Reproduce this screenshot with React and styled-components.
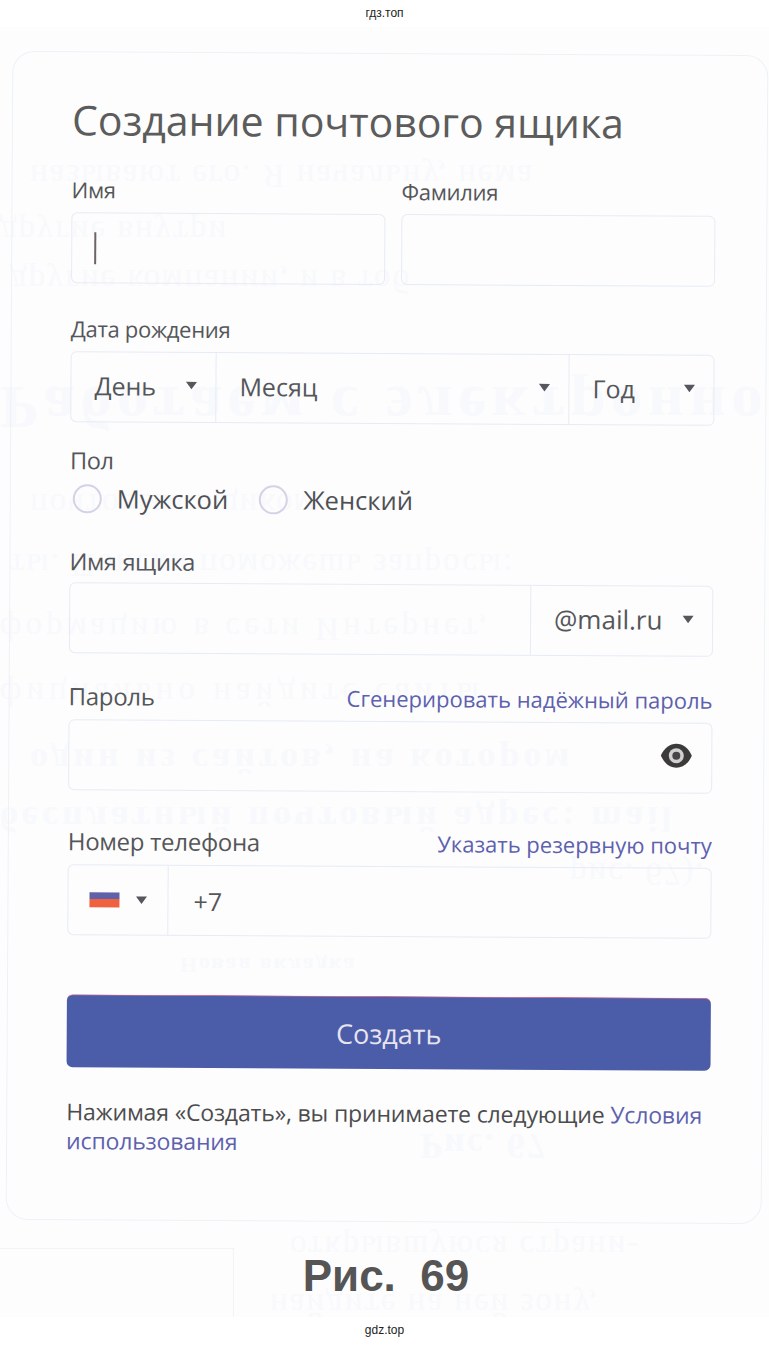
import styled, { createGlobalStyle } from "styled-components";

const GlobalStyle = createGlobalStyle`
  html, body {
    margin: 0;
    padding: 0;
    background: #fff;
  }
  body {
    font-family: "Open Sans", "Noto Sans", sans-serif;
  }
`;

// faint print showing through from the back of the scanned page
const ghostLines = [
  { top: 157, left: 30, size: 33, text: "называют его. Я начальну, нема" },
  { top: 213, left: 0, size: 33, text: "другие внутри" },
  { top: 262, left: 10, size: 33, text: "другие компании, и в тоб" },
  { top: 372, left: 0, size: 62, bold: true, spacing: 6, text: "Работаем с электронной" },
  { top: 486, left: 30, size: 33, text: "почтовым ящиком." },
  { top: 546, left: 10, size: 33, text: "ты. Поиски поможешь запросы:" },
  { top: 610, left: 0, size: 33, spacing: 4, text: "формацию в сети Интернет," },
  { top: 675, left: 0, size: 33, spacing: 5, text: "фициально найдите сайты" },
  { top: 740, left: 30, size: 36, bold: true, spacing: 4, text: "один из сайтов, на котором" },
  { top: 798, left: 0, size: 36, bold: true, spacing: 4, text: "бесплатный почтовый адрес: mail" },
  { top: 855, left: 570, size: 33, text: "рис. 67)." },
  { top: 952, left: 180, size: 22, bold: true, text: "Новая вкладка" },
  { top: 1125, left: 420, size: 36, bold: true, text: "Рис. 67" },
  { top: 1228, left: 290, size: 33, text: "открывшуюся страни-" },
  { top: 1286, left: 270, size: 33, text: "найдите на ней зону," },
];

const Caret = () => (
  <CaretIcon viewBox="0 0 12 9">
    <path d="M0.5 1h11L6 8.5z" fill="#55565e" />
  </CaretIcon>
);

const EyeIcon = () => (
  <EyeSvg viewBox="0 0 32 26">
    <path d="M0.5 13C4 5 9.5 1 16 1s12 4 15.5 12C28 21 22.5 25 16 25S4 21 0.5 13z" fill="#3d3a3a" />
    <circle cx="16" cy="13" r="7.5" fill="#cfd1d4" />
    <circle cx="16" cy="13" r="4" fill="#474545" />
  </EyeSvg>
);

const App = () => {
  return (
    <Page>
      <GlobalStyle />
      <Watermark>гдз.топ</Watermark>
      <Scan>
        <GhostLayer aria-hidden="true">
          {ghostLines.map((line) => (
            <GhostLine
              key={line.text}
              $top={line.top}
              $left={line.left}
              $size={line.size}
              $bold={line.bold}
              $spacing={line.spacing}
            >
              {line.text}
            </GhostLine>
          ))}
          <GhostFrame />
        </GhostLayer>
        <Card>
          <Title>Создание почтового ящика</Title>

          <TwoColumns>
            <Field>
              <Label>Имя</Label>
              <Box>
                <TextCursor />
              </Box>
            </Field>
            <Field>
              <Label>Фамилия</Label>
              <Box />
            </Field>
          </TwoColumns>

          <Field $top={33}>
            <Label>Дата рождения</Label>
            <Box>
              <Segment $width={145}>
                <SelectText>День</SelectText>
                <Caret />
              </Segment>
              <Segment $grow>
                <SelectText>Месяц</SelectText>
                <Caret />
              </Segment>
              <Segment $width={144} $last>
                <SelectText>Год</SelectText>
                <Caret />
              </Segment>
            </Box>
          </Field>

          <Field $top={26}>
            <Label $gap={10} $size={23.5}>Пол</Label>
            <RadioRow>
              <RadioOption>
                <RadioCircle />
                Мужской
              </RadioOption>
              <RadioOption>
                <RadioCircle />
                Женский
              </RadioOption>
            </RadioRow>
          </Field>

          <Field $top={35}>
            <Label $gap={9} $size={23.5}>Имя ящика</Label>
            <Box>
              <Segment $grow />
              <Segment $width={181} $last>
                <SelectText $size={26}>@mail.ru</SelectText>
                <Caret />
              </Segment>
            </Box>
          </Field>

          <Field $top={31}>
            <LabelRow>
              <Label $gap={0} $size={24}>Пароль</Label>
              <LinkText>Сгенерировать надёжный пароль</LinkText>
            </LabelRow>
            <Box $align="center" $justify="flex-end">
              <EyeIcon />
            </Box>
          </Field>

          <Field $top={39}>
            <LabelRow>
              <Label $gap={0} $size={24}>Номер телефона</Label>
              <LinkText>Указать резервную почту</LinkText>
            </LabelRow>
            <Box>
              <Segment $width={100} $flag>
                <Flag />
                <Caret />
              </Segment>
              <PhoneCode>+7</PhoneCode>
            </Box>
          </Field>

          <SubmitButton type="button">Создать</SubmitButton>

          <Terms>
            Нажимая «Создать», вы принимаете следующие <TermsLink>Условия использования</TermsLink>
          </Terms>
        </Card>
        <Figure>Рис.&nbsp; 69</Figure>
      </Scan>
      <Watermark>gdz.top</Watermark>
    </Page>
  );
};

const Page = styled.div`
  width: 769px;
  height: 1347px;
  overflow: hidden;
  background: #fff;
`;

const Watermark = styled.div`
  height: 27px;
  line-height: 27px;
  text-align: center;
  font-family: "Liberation Sans", Arial, sans-serif;
  font-size: 12px;
  color: #222;
`;

const Scan = styled.div`
  position: relative;
  height: 1290px;
  padding-top: 26px;
  box-sizing: border-box;
  background: #fdfdfd;
  overflow: hidden;
`;

const GhostLayer = styled.div`
  position: absolute;
  inset: -27px 0 0 0;
`;

const GhostLine = styled.div`
  position: absolute;
  top: ${(p) => p.$top}px;
  left: ${(p) => p.$left}px;
  white-space: nowrap;
  font-family: "Liberation Serif", serif;
  font-size: ${(p) => p.$size}px;
  font-weight: ${(p) => (p.$bold ? 700 : 400)};
  letter-spacing: ${(p) => p.$spacing ?? 2}px;
  color: #f7f9fc;
  transform: scaleY(-1);
`;

const GhostFrame = styled.div`
  position: absolute;
  top: 1248px;
  left: -2px;
  width: 234px;
  height: 70px;
  border: 1px solid #f1f3f7;
`;

const Card = styled.section`
  position: relative;
  width: 756px;
  height: 1169px;
  margin-left: 9px;
  padding: 40px 51px 0 59px;
  box-sizing: border-box;
  border: 1px solid #edf2f8;
  border-radius: 22px;
  transform: rotate(0.33deg);
`;

const Title = styled.h1`
  margin: 0 0 31px;
  font-size: 41px;
  line-height: 54px;
  font-weight: 400;
  color: #5c5c5c;
  white-space: nowrap;
`;

const TwoColumns = styled.div`
  display: grid;
  grid-template-columns: 1fr 1fr;
  gap: 16px;
`;

const Field = styled.div`
  margin-top: ${(p) => p.$top || 0}px;
`;

const Label = styled.div`
  height: 24px;
  line-height: 24px;
  margin-bottom: ${(p) => p.$gap ?? 11}px;
  font-size: ${(p) => p.$size || 22}px;
  letter-spacing: -0.3px;
  color: #55565a;
`;

const LabelRow = styled.div`
  display: flex;
  justify-content: space-between;
  align-items: center;
  height: 24px;
  margin-bottom: 11px;
`;

const LinkText = styled.span`
  font-size: 22px;
  line-height: 24px;
  color: #5d61ae;
`;

const Box = styled.div`
  display: flex;
  align-items: ${(p) => p.$align || "stretch"};
  justify-content: ${(p) => p.$justify || "flex-start"};
  height: 71px;
  box-sizing: border-box;
  border: 1px solid #e6ebf6;
  border-radius: 6px;
`;

const TextCursor = styled.span`
  align-self: center;
  width: 2px;
  height: 32px;
  margin-left: 22px;
  background: #6d6468;
`;

const Segment = styled.div`
  display: flex;
  align-items: center;
  justify-content: space-between;
  flex: ${(p) => (p.$grow ? "1" : "none")};
  width: ${(p) => (p.$width ? `${p.$width}px` : "auto")};
  padding: ${(p) => (p.$flag ? "0 20px 1px 21px" : "0 18px 4px 23px")};
  box-sizing: border-box;
  border-right: ${(p) => (p.$last ? "none" : "1px solid #e6ebf6")};
`;

const SelectText = styled.span`
  font-size: ${(p) => p.$size || 25}px;
  color: #55565a;
`;

const CaretIcon = styled.svg`
  width: 12px;
  height: 9px;
  flex: none;
`;

const RadioRow = styled.div`
  display: flex;
  gap: 31px;
  height: 32px;
  padding-left: 3px;
`;

const RadioOption = styled.label`
  display: flex;
  align-items: center;
  gap: 15px;
  font-size: 25.5px;
  color: #4f5054;
`;

const RadioCircle = styled.span`
  width: 29px;
  height: 29px;
  box-sizing: border-box;
  border: 2px solid #d3d3e8;
  border-radius: 50%;
`;

const EyeSvg = styled.svg`
  width: 32px;
  height: 26px;
  margin-right: 19px;
  margin-bottom: 6px;
`;

const Flag = styled.span`
  width: 30px;
  height: 15px;
  background: linear-gradient(#5f62a8 0 7px, #f0623f 7px 15px);
`;

const PhoneCode = styled.span`
  align-self: center;
  margin-left: 25px;
  font-size: 25px;
  color: #55565a;
`;

const SubmitButton = styled.button`
  display: block;
  width: 100%;
  height: 73px;
  margin-top: 59px;
  border: none;
  border-top: 1px solid #d56a8f;
  border-radius: 6px;
  background: #4b5ca8;
  color: #e8e4ee;
  font-family: inherit;
  font-size: 27px;
`;

const Terms = styled.p`
  margin: 30px 0 0;
  font-size: 23px;
  line-height: 29px;
  letter-spacing: -0.15px;
  color: #4c4c4e;
`;

const TermsLink = styled.span`
  color: #5d61ae;
`;

const Figure = styled.div`
  position: relative;
  margin-top: 29px;
  padding-left: 3px;
  text-align: center;
  font-family: "Liberation Sans", Arial, sans-serif;
  font-size: 44px;
  line-height: 50px;
  font-weight: 700;
  color: #555;
`;

export default App;
